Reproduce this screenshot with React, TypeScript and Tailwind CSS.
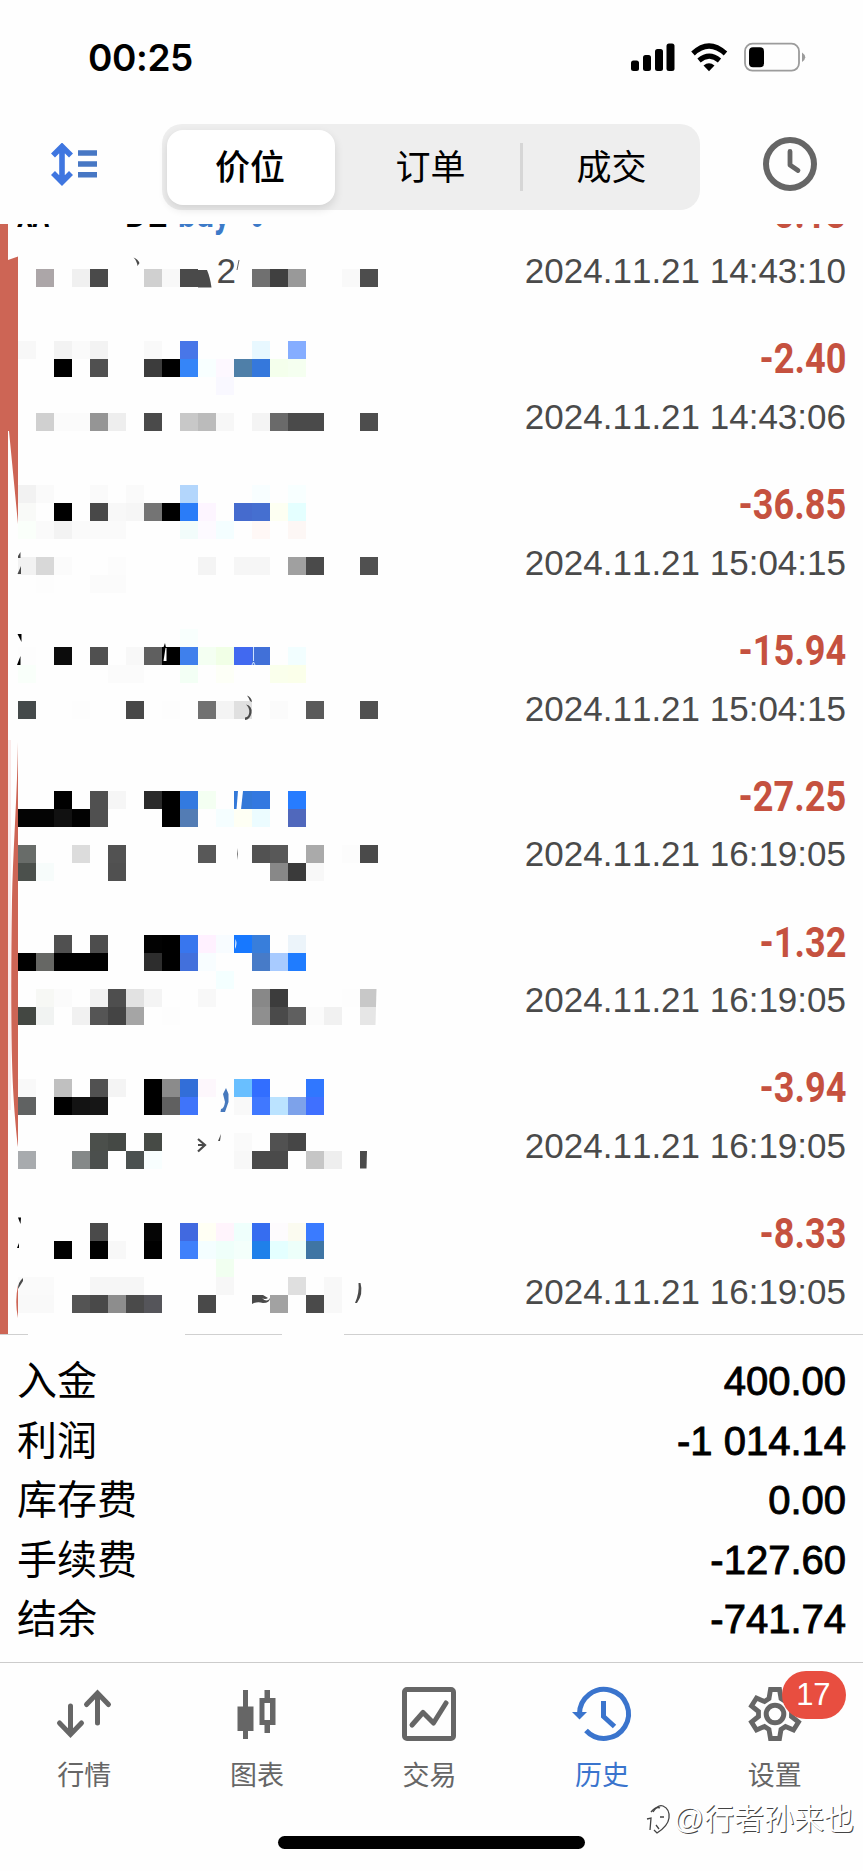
import { clsx } from 'clsx';
import type { ReactNode } from 'react';

interface Deal {
  amount: string;
  time: string;
}

const deals: Deal[] = [
  { amount: '-5.13', time: '2024.11.21 14:43:10' },
  { amount: '-2.40', time: '2024.11.21 14:43:06' },
  { amount: '-36.85', time: '2024.11.21 15:04:15' },
  { amount: '-15.94', time: '2024.11.21 15:04:15' },
  { amount: '-27.25', time: '2024.11.21 16:19:05' },
  { amount: '-1.32', time: '2024.11.21 16:19:05' },
  { amount: '-3.94', time: '2024.11.21 16:19:05' },
  { amount: '-8.33', time: '2024.11.21 16:19:05' },
];

const summary = [
  { label: '入金', value: '400.00' },
  { label: '利润', value: '-1 014.14' },
  { label: '库存费', value: '0.00' },
  { label: '手续费', value: '-127.60' },
  { label: '结余', value: '-741.74' },
];

// Redaction mosaic: grid row -> "column:colour" cells
const CELL = 17.985;
const mosaic: Record<number, string> = {
  15: '2:aca6a8 4:f0f0f0 5:4a4a4a 8:d0d0d0 9:f8f8f8 10:4a4a4a 14:707070 15:404040 16:999999 19:f9f9f9 20:4d4d4d',
  19: '1:f8f8f8 3:f3f3f3 4:fafafa 5:f3f3f3 8:f9f9f9 10:4876e8 14:e8f8ff 16:85adff',
  20: '3:000 5:505050 8:3c3c3c 9:000 10:3585f8 11:f8ffff 12:fdf8ff 13:4f7fa8 14:3578dc 15:f4ffec 16:f5fff0',
  21: '12:f9f8ff',
  23: '2:d0d0d0 3:fbfbfb 4:fbfbfb 5:959595 6:eee 8:4a4a4a 10:c8c8c8 11:bbb 12:f7f7f7 14:f4f4f4 15:6a6a6a 16:4a4a4a 17:4a4a4a 20:4d4d4d',
  27: '1:f2f2f2 2:fafafa 5:fafafa 7:fafafa 10:b3d6fc 14:f8feff 16:f8ffff',
  28: '1:f9faf8 3:000 5:484848 6:f8f8f8 7:f6f6f6 8:747474 9:000 10:2a7cf8 11:fdf5ff 13:456bce 14:456fd0 15:fdfff2 16:e4ffff',
  29: '1:fafffa 2:fafafa 3:f3f3f3 4:fafafa 5:fafafa 6:fafafa 10:f2fcfb 11:fdfaff 12:f4feff 14:fff8f6 16:fdf7f5',
  31: '1:f2f2f2 2:d8d8d8 3:fbfbfb 6:fcfcfc 11:f4f4f4 13:f6f6f6 14:f6f6f6 16:a0a0a0 17:4a4a4a 20:505050',
  32: '2:fdfdfd 5:fbfbfb 6:fbfbfb',
  35: '10:f8fffd',
  36: '1:fdfdfd 3:0c0c0c 5:505050 7:f8f8f8 8:5f5f5f 9:000 10:3f80ec 11:f4fff2 12:f1ffe6 13:4169f0 14:4170d8 16:f2feff',
  37: '1:f9fffa 6:fbfbfb 7:fbfbfb 10:f3fff5 12:fdfff7 15:faffec 16:fbffea',
  39: '1:454a4b 4:fdfdfd 7:484848 9:fdfdfd 11:717171 12:f4f4f4 13:e0e0e0 15:fbfbfb 17:5a5a5a 20:505050',
  44: '3:000 5:505050 6:f6f6f6 8:2a2a2a 9:000 10:337ae0 11:f4fff2 13:3378d8 14:3378e0 16:277cff',
  45: '1:040404 2:040404 3:111 4:020202 5:505050 9:000 10:537cb4 12:f5feff 13:fefff4 14:ecfcff 16:5068bc',
  47: '1:686c69 4:dcdcdc 6:525252 11:585858 14:525252 15:585858 17:aaa 19:fcfcfc 20:4a4a4a',
  48: '1:4b504c 2:f7fcfb 6:505050 15:888 16:3a3a3a 17:f8f8f8',
  52: '3:505050 5:4d4d4d 8:020202 9:000 10:3876ee 11:fff1ff 12:f8fcff 13:1778ff 14:387edb 16:ecf4fa',
  53: '1:000 2:666764 3:000 4:000 5:000 8:2d2d2d 9:000 10:4270dc 11:f8fdff 14:477bc8 15:a8cbff 16:1f7cff',
  54: '12:f4ffff',
  55: '2:f7f8f5 3:fbfbfb 5:f2f2f2 6:4e4e4e 7:e2e2e2 8:f4f4f4 11:f8f8f8 14:888 15:3c3c3c 19:fdfdfd 20:c8c8c8',
  56: '1:434742 2:f1f3f2 4:f1f1f1 5:555 6:444 7:a5a5a5 9:fdfdfd 14:8f8f8f 15:4a4a4a 16:5f5f5f 17:fbfbfb 18:f1f1f1 20:e6e6e6',
  60: '1:f9f9f9 3:c0c0c0 5:515151 6:f4f4f4 8:000 9:8b8b8b 10:326ed8 11:fdf7fc 13:69bfff 14:326eff 17:3077ff',
  61: '1:606262 3:000 4:131313 5:161616 8:000 9:606060 10:3f74fa 13:f9f9f9 14:4078ff 15:bbe3ff 16:7da2ea 17:3f70ff',
  63: '5:4b4f4b 6:454945 8:464a45 13:fafafa 15:515151 16:464646',
  64: '1:a8abae 4:858989 5:4b4f4d 7:4b5150 8:f8fefe 13:f8f8f8 14:4a4a4a 15:4a4a4a 17:c6c6c6 18:eee',
  68: '5:4a4a4a 8:050505 10:4169e0 11:fffff4 12:fff4fc 13:effffc 14:366df0 15:fdfbfd 16:fbfbf0 17:3a7bff',
  69: '3:000 5:000 6:f8f8f8 8:000 10:3f80fb 11:f4feff 12:effffa 13:f4fffb 14:1f80ea 15:e4ffff 16:edfffa 17:3f75a4',
  70: '12:f1fff0',
  71: '1:fafafa 2:fafafa 5:f6f6f6 6:f6f6f6 7:f6f6f6 12:f7f7f7 16:dfdfdf 18:f8f8f8',
  72: '1:f9f9f9 2:f9f9f9 4:545454 5:494949 6:8d8d8d 7:4a4a4a 8:55555a 11:494949 15:a2a2a2 17:4a4a4a 18:f8f8f8',
};

function Mosaic() {
  return (
    <svg className="absolute left-0 top-0" width="400" height="1110" viewBox="0 224 400 1110">
      {/* red marker strokes on the left edge */}
      <g fill="#cd6555">
        <rect x="0" y="224" width="8" height="1110" />
        <path d="M8 260L18 256.500V524L9 431H8Z" />
        <path d="M18 742C17 800 13 850 12 900C11 960 11 1020 12 1060C13 1100 16 1130 18 1147Z" />
        <path d="M18 1285Q14.500 1302 18 1318Z" />
      </g>
      <rect x="8" y="740" width="3" height="370" fill="#faeaea" />

      <g shapeRendering="crispEdges">
        {Object.entries(mosaic).map(([row, cells]) =>
          cells.split(' ').map((cell) => {
            const [col, color] = cell.split(':');
            return (
              <rect
                key={`${row}-${col}`}
                x={Number(col) * CELL}
                y={Number(row) * CELL - 0.4}
                width={CELL}
                height={CELL}
                fill={`#${color}`}
              />
            );
          })
        )}
      </g>

      {/* leftovers of the text that the mosaic did not cover */}
      <g fill="#4a4a4a">
        <text x="216.500" y="283" fontSize="35" fontFamily="Liberation Sans, sans-serif">2</text>
        <path d="M198 270H207Q210 277 211.500 287.500H198Z" />
        <path d="M133.500 257.500Q138 259 139.500 263L137.500 266Q137 261 133.500 257.500Z" />
        <path d="M239 260L237 270" stroke="#666" strokeWidth="1" />
        <path d="M18 556L20.500 552V558H18ZM17.500 574L21 566V574Z" />
        <path d="M247 695.500Q251.500 697 252 702L250 701Q249 698 247 695.500Z" />
        <path d="M246 704.500Q252.500 706 251.500 713Q250 719.500 245 720V717.500Q249 717 249.300 712Q249.300 707 246 704.500Z" />
        <path d="M238 848Q236.500 854 238 860Z" />
        <path d="M198 1139L205 1145L198 1151.500M198 1145H204" fill="none" stroke="#4a4a4a" strokeWidth="2.200" />
        <path d="M221 1134L218 1141H220Z" />
        <path d="M360 1151H367L366.500 1168.500H360Z" />
        <path d="M23 1278Q18 1282 18 1289L23 1281Z" />
        <path d="M358.500 1283H360.500Q363.500 1294 357 1303H355Q359.500 1293 358.500 1283Z" />
        <path d="M252 1295H263L268 1298Q265 1300 262 1298Q267 1303 270 1298Q270 1303 263 1303Q257 1301 252 1304Z" />
      </g>
      <g fill="#000">
        <path d="M17.500 634H21.500V642ZM17 665L20.500 656V665Z" />
        <path d="M162.500 650L165 643L166.500 650Z" />
        <path d="M18 1217.500H21L20.500 1224ZM17 1248L19 1243V1248Z" />
      </g>
      <path d="M163.500 661L165.500 648H166.500V661Z" fill="#fff" />
      <path d="M253.500 647V661M252 665L253.500 662L255 665" fill="none" stroke="#cfe0ff" strokeWidth="1" />
      <path d="M238 791L243 791L241 809.500H236.500Z" fill="#fff" />
      <path d="M235.500 939Q237.500 944 235 949Z" fill="#fff" />
      <path d="M376.500 989H378V1025H375.500Z" fill="#fff" />
      <path d="M226 1088L228.500 1094V1102L225 1112H220.500L221 1109Q224 1109 225 1102L223 1094Z" fill="#4779bd" />
    </svg>
  );
}

function StatusBar() {
  return (
    <div className="flex h-[112px] items-start justify-between pl-[88px] pr-[57px]">
      <span className="mt-[36px] font-['Inter'] text-[37px] leading-[44px] font-semibold tracking-[-0.4px] text-black">
        00:25
      </span>
      <svg className="mt-[42px]" width="176" height="31" viewBox="630 42 176 31">
        <rect x="631" y="60.500" width="8" height="10.500" rx="2.500" />
        <rect x="643" y="55" width="8" height="16" rx="2.500" />
        <rect x="655" y="49" width="8" height="22" rx="2.500" />
        <rect x="666.500" y="43.500" width="8" height="27.500" rx="2.500" />
        <path d="M693 53.500C703.500 43.500 714.500 43.500 725.500 53.500" fill="none" stroke="#000" strokeWidth="5.200" />
        <path d="M699 60.500C706 54.500 712.500 54.500 719.500 60.500" fill="none" stroke="#000" strokeWidth="5" />
        <path d="M703.500 65.500Q709 61 714.500 65.500L709 71.200Z" />
        <rect x="745" y="43.700" width="54" height="27" rx="7.500" fill="none" stroke="#9c9c9c" strokeWidth="1.800" />
        <rect x="749" y="47.200" width="15" height="20" rx="4" />
        <path d="M802 52.500Q808.500 57 802 62Z" fill="#9c9c9c" />
      </svg>
    </div>
  );
}

function Toolbar() {
  return (
    <div className="flex h-[112px] items-start pl-[51px] pr-[46px]">
      <svg className="mt-[31px]" width="47" height="43" viewBox="51 143 47 43">
        <path d="M62 147V182M53 155.500L62 146.500L71 155.500M53 173L62 182L71 173" fill="none" stroke="#3f76e0" strokeWidth="5.600" />
        <path d="M78 153H97M78 164H97M78 174.700H97" stroke="#4777c4" strokeWidth="5.400" />
      </svg>

      <div className="ml-[64px] mt-[12px] flex h-[86px] w-[538px] items-center rounded-[20px] bg-[#eeeeee] pl-[5px] text-[35px] text-black">
        <div className="flex h-[75px] w-[168px] items-center justify-center rounded-[16px] bg-white pt-[2px] pr-[2px] font-medium shadow-[0_4px_10px_rgba(0,0,0,0.12)]">
          价位
        </div>
        <div className="flex w-[185px] items-center justify-center pt-[2px] pl-[6px]">订单</div>
        <div className="h-[48px] w-[3px] bg-[#d6d6d6]" />
        <div className="flex flex-1 items-center justify-center pt-[2px]">成交</div>
      </div>

      <svg className="ml-auto mt-[25px]" width="54" height="54" viewBox="0 0 54 54" fill="none" stroke="#666" strokeLinecap="round" strokeLinejoin="round">
        <circle cx="27" cy="27" r="24" strokeWidth="6" />
        <path d="M27 14.500V28L35 33.500" strokeWidth="4.800" />
      </svg>
    </div>
  );
}

function DealRow({ deal, first }: { deal: Deal; first: boolean }) {
  return (
    <div className="h-[145.8px] shrink-0 pr-[17px] pt-[20px] text-right">
      <div className="flex h-[50px] justify-end font-['Roboto'] text-[43px] leading-[50px] font-bold">
        {first && (
          <div className="mr-auto flex pl-[17px] text-left text-[41px]">
            <span className="w-[108px] origin-left scale-x-[0.6] text-black">XA</span>
            <span className="w-[53px] origin-left scale-x-[0.84] text-black">DE</span>
            <span className="w-[72px] origin-left scale-x-[0.78] text-[#3c7ac8]">buy</span>
            <span className="origin-left scale-x-[0.6] text-[#3c7ac8]">0</span>
          </div>
        )}
        <span className="origin-right scale-x-[0.84] text-[#c5513f]">{deal.amount}</span>
      </div>
      <div className="mt-[13.5px] text-[35px] leading-[40px] text-[#4a4a4a]">{deal.time}</div>
    </div>
  );
}

const tabs: { label: string; icon: ReactNode; active?: boolean; badge?: string }[] = [
  {
    label: '行情',
    icon: (
      <g fill="none" stroke="currentColor" strokeWidth="5" strokeLinecap="round">
        <path d="M15.500 19V47M4.500 36L15.500 47.500L26.500 36" />
        <path d="M42.500 36V7M31.500 17.500L42.500 6L53.500 17.500" />
      </g>
    ),
  },
  {
    label: '图表',
    icon: (
      <g fill="currentColor">
        <path d="M15 3H20V19.500H25.500V44H20V52H15V44H9.500V19.500H15Z" />
        <path fillRule="evenodd" d="M36.500 3H42V11H47.500V38H42V46H36.500V38H31.500V11H36.500ZM36.500 16V33H42V16Z" />
      </g>
    ),
  },
  {
    label: '交易',
    icon: (
      <g fill="none" stroke="currentColor" strokeWidth="5" strokeLinejoin="round">
        <rect x="4.500" y="2.500" width="49" height="49" rx="2.500" />
        <path d="M12 38L23 25.500L33.500 36L46 16" strokeLinecap="round" />
      </g>
    ),
  },
  {
    label: '历史',
    active: true,
    icon: (
      <g fill="none" stroke="currentColor" strokeWidth="5">
        <path d="M6.500 27A24.500 24.500 0 1 1 13 43.500" />
        <path d="M-1 25H14L6.500 32.500Z" fill="currentColor" stroke="none" />
        <path d="M30.500 14V29.500L41.500 39.500" />
      </g>
    ),
  },
  {
    label: '设置',
    badge: '17',
    icon: (
      <g fill="none" stroke="currentColor" strokeWidth="4.800">
        <circle cx="29" cy="27" r="8.800" strokeWidth="5" />
        <path d="M24.500 2.500H33.500L35 11.500L39.500 14.500L47.500 11L52.500 19L45.500 24.500V29.500L52.500 35L47.500 43L39.500 39.500L35 42.500L33.500 51.500H24.500L23 42.500L18.500 39.500L10.500 43L5.500 35L12.500 29.500V24.500L5.500 19L10.500 11L18.500 14.500L23 11.500Z" />
      </g>
    ),
  },
];

function TabBar() {
  return (
    <div className="flex h-[139px] border-t border-[#cccccc] pt-[24px]">
      {tabs.map((tab) => (
        <div
          key={tab.label}
          className={clsx(
            'relative flex flex-1 flex-col items-center pr-[4px]',
            tab.active ? 'text-[#3a74cd]' : 'text-[#666666]'
          )}
        >
          <svg className="overflow-visible" width="58" height="54" viewBox="0 0 58 54">
            {tab.icon}
          </svg>
          <span className="mt-[16px] text-[27px] leading-[38px]">{tab.label}</span>
          {tab.badge && (
            <span className="absolute left-[92px] top-[-16px] flex h-[48px] w-[64px] items-center justify-center rounded-full bg-[#e84e40] pr-[2px] text-[31px] text-white">
              {tab.badge}
            </span>
          )}
        </div>
      ))}
    </div>
  );
}

export default function App() {
  return (
    <div className="relative flex h-[1871px] w-[863px] flex-col overflow-hidden bg-[#fefefe] font-['Liberation_Sans','Noto_Sans_CJK_SC',sans-serif] [font-kerning:none]">
      <StatusBar />
      <Toolbar />

      {/* Deals, scrolled to the end */}
      <div className="relative flex h-[1110px] flex-col justify-end overflow-hidden">
        {deals.map((deal, i) => (
          <DealRow key={i} deal={deal} first={i === 0} />
        ))}
        <Mosaic />
      </div>

      <div className="flex h-px">
        <div className="w-[28px] bg-[#d0d0d0]" />
        <div className="ml-[157px] w-[97px] bg-[#d0d0d0]" />
        <div className="ml-[62px] flex-1 bg-[#d0d0d0]" />
      </div>

      <div className="h-[327px] px-[17px] pt-[17px] text-[40px] text-black">
        {summary.map((item) => (
          <div key={item.label} className="flex h-[59.5px] items-center justify-between leading-[59px]">
            <span>{item.label}</span>
            <span className="[-webkit-text-stroke:0.9px_#000]">{item.value}</span>
          </div>
        ))}
      </div>

      <TabBar />

      <div className="flex justify-center pt-[35px]">
        <div className="h-[13px] w-[307px] rounded-full bg-black" />
      </div>

      {/* Watermark */}
      <div className="absolute right-[9px] top-[1797px] flex items-center gap-[3px] text-[30px] leading-[44px] text-white [text-shadow:1px_1px_0.5px_#444]">
        <svg width="26" height="34" viewBox="0 0 26 34" fill="none" stroke="#444" strokeWidth="1.300">
          <path d="M8 10Q13 2 18 4Q25 7 24 16Q23 24 12 31L9 28" />
          <path d="M2 17L6 16L5 28M6 10Q11 4 15 6M15 15H19M11 23L14 27" />
        </svg>
        <span>@行者孙来也</span>
      </div>
    </div>
  );
}
